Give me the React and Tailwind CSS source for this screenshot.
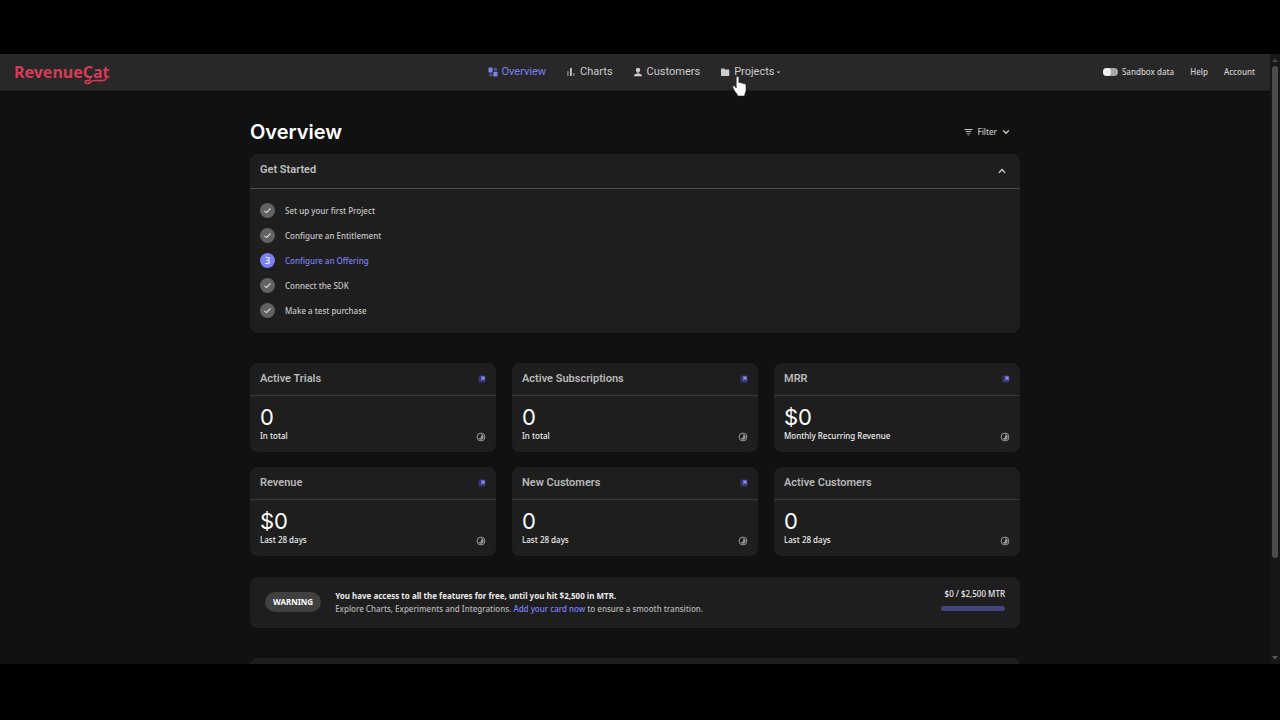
import React, { useState } from 'react';

const Logo = () => (
  <a href="#" className="relative justify-self-start font-['Noto_Sans',sans-serif] text-base leading-5 font-bold text-[#d43d57]">
    RevenueCat
    <svg className="absolute top-[9px] left-[68px]" width="29" height="14" viewBox="0 0 29 14" fill="none" stroke="currentColor" strokeWidth="1.6" strokeLinecap="round">
      <path d="M8 6.500C8.500 9.500 7 9.800 5.500 9.600C3.500 9.300 2.800 10.300 3.200 11.400C3.800 13 7.300 13 8.500 11C9.500 9 13 9.500 17 9.600C22.500 9.700 24.500 9 24.500 6" />
    </svg>
  </a>
);

const OverviewIcon = () => (
  <svg width="10" height="10" viewBox="0 0 10 10" fill="currentColor">
    <rect x="0.500" y="0.500" width="4" height="5" rx="0.800" />
    <rect x="5.500" y="0.800" width="3.500" height="3" rx="0.700" opacity="0.450" />
    <rect x="1" y="6.500" width="3.500" height="2.700" rx="0.700" opacity="0.450" />
    <rect x="5.300" y="4.800" width="4.200" height="4.700" rx="0.800" />
  </svg>
);

const ChartsIcon = () => (
  <svg width="10" height="10" viewBox="0 0 10 10" fill="currentColor">
    <rect x="1" y="4" width="1.700" height="5" rx="0.500" opacity="0.500" />
    <rect x="4" y="1" width="1.800" height="8" rx="0.500" />
    <rect x="7" y="6" width="1.500" height="3" rx="0.500" opacity="0.500" />
  </svg>
);

const CustomersIcon = () => (
  <svg width="10" height="10" viewBox="0 0 10 10" fill="currentColor">
    <circle cx="5" cy="3" r="2.200" />
    <rect x="3.800" y="4.500" width="2.400" height="2.500" opacity="0.600" />
    <path d="M1 9.300C1 7.200 2.500 6.800 5 6.800S9 7.200 9 9.300Z" />
  </svg>
);

const ProjectsIcon = () => (
  <svg width="10" height="10" viewBox="0 0 10 10" fill="currentColor">
    <path d="M1 2.500C1 1.800 1.400 1.500 2 1.500H4L5 2.500H8.300C9 2.500 9.300 2.900 9.300 3.500V8C9.300 8.700 9 9 8.300 9H2C1.400 9 1 8.700 1 8Z" />
  </svg>
);

const HandCursor = () => (
  <svg className="absolute top-3 left-3" width="16" height="21" viewBox="0 0 16 21" fill="#fff" stroke="#222" strokeWidth="0.600">
    <path d="M4.200 1.800C4.200 0.200 6.800 0.200 6.900 1.800V7C7.500 6 9 6.200 9.300 7.300C10 6.500 11.400 6.900 11.600 8C12.500 7.400 14 7.800 14 9.300V14C14 16 12.800 17.200 12.500 20H5.600C5.400 17.500 3 16.500 1.800 13.500L0.800 11C0.500 9.600 2.100 9.200 2.900 10.300L4.200 12Z" />
  </svg>
);

const Chevron = ({ up }) => (
  <svg width="8" height="8" viewBox="0 0 8 8" fill="none" stroke="currentColor" strokeWidth="1.300" strokeLinecap="round">
    <path d={up ? 'M1.200 5.500L4 2.500L6.800 5.500' : 'M1.500 2.800L4 5.300L6.500 2.800'} />
  </svg>
);

const FilterIcon = () => (
  <svg width="9" height="8" viewBox="0 0 9 8" fill="none" stroke="currentColor" strokeWidth="1">
    <path d="M0.500 1.500H8.500M1.800 3.500H7.200" />
    <path d="M2.500 5.500H6.500M3.500 7H5.500" opacity="0.600" />
  </svg>
);

const OpenChartIcon = () => (
  <svg width="8" height="8" viewBox="0 0 8 8" fill="none">
    <rect x="0.500" y="0.500" width="7" height="7" rx="1" fill="#35356b" />
    <path d="M3 2.200H6V5.200M6 2.200L3 5.200" stroke="#8d90ff" strokeWidth="1.200" />
  </svg>
);

const FreshnessIcon = () => (
  <svg width="10" height="10" viewBox="0 0 10 10" fill="none">
    <circle cx="5" cy="5" r="3.900" stroke="#9a9a9a" strokeWidth="1" />
    <path d="M5.300 2.300A2.700 2.700 0 1 1 2.700 6.500L5 5.500Z" fill="#9a9a9a" />
  </svg>
);

const steps = [
  { label: 'Set up your first Project', done: true },
  { label: 'Configure an Entitlement', done: true },
  { label: 'Configure an Offering', done: false },
  { label: 'Connect the SDK', done: true },
  { label: 'Make a test purchase', done: true },
];

const metrics = [
  { title: 'Active Trials', value: '0', note: 'In total', link: true },
  { title: 'Active Subscriptions', value: '0', note: 'In total', link: true },
  { title: 'MRR', value: '$0', note: 'Monthly Recurring Revenue', link: true },
  { title: 'Revenue', value: '$0', note: 'Last 28 days', link: true },
  { title: 'New Customers', value: '0', note: 'Last 28 days', link: true },
  { title: 'Active Customers', value: '0', note: 'Last 28 days', link: false },
];

const Header = () => (
  <header className="grid h-[37px] shrink-0 grid-cols-[1fr_auto_1fr] items-center border-b border-[#1c1c1c] bg-[#282828] pr-[15px] pl-3.5">
    <Logo />
    <nav className="flex items-center gap-5 font-['Roboto',sans-serif] text-[11px] leading-4 font-normal text-[#cccccc]">
      <a href="#" className="flex items-center gap-1 text-[#7c80f5]"><OverviewIcon />Overview</a>
      <a href="#" className="flex items-center gap-1"><ChartsIcon />Charts</a>
      <a href="#" className="flex items-center gap-1"><CustomersIcon />Customers</a>
      <button type="button" className="relative flex items-center gap-1">
        <ProjectsIcon />
        Projects
        <svg className="-ml-0.5" width="5" height="4" viewBox="0 0 5 4" fill="currentColor"><path d="M0.500 1.500H4.500L2.500 3.300Z" /></svg>
        <HandCursor />
      </button>
    </nav>
    <div className="flex items-center gap-4 justify-self-end leading-4 text-[#cfcfcf]">
      <label className="flex items-center gap-1">
        <input
          type="checkbox"
          role="switch"
          className="h-2 w-[15px] appearance-none rounded-full bg-[#a9a9a9] before:block before:size-2 before:rounded-full before:bg-[#efefef]"
        />
        Sandbox data
      </label>
      <a href="#">Help</a>
      <a href="#">Account</a>
    </div>
  </header>
);

const GetStarted = () => {
  const [open, setOpen] = useState(true);

  return (
    <section className="rounded-lg bg-[#1e1e1e]">
      <div className="flex h-[35px] items-center justify-between border-b border-[#4d4d4d] px-2.5">
        <h2 className="pb-0.5 font-['Roboto',sans-serif] text-[11px] leading-4 font-semibold text-[#c0c0c0]">Get Started</h2>
        <button type="button" aria-label="Toggle get started" aria-expanded={open} onClick={() => setOpen(!open)} className="p-1 text-[#c8c8c8]">
          <Chevron up={open} />
        </button>
      </div>
      {open && (
        <ol className="flex flex-col gap-2.5 px-2.5 pt-3.5 pb-[15px]">
          {steps.map((step, i) => (
            <li key={step.label} className="flex h-[15px] items-center gap-2.5">
              {step.done ? (
                <span className="flex size-[15px] items-center justify-center rounded-full bg-[#626262]">
                  <svg width="9" height="9" viewBox="0 0 9 9" fill="none" stroke="#e2e2e2" strokeWidth="1.100">
                    <path d="M1.500 4.800L3.500 6.600L7.500 2.500" />
                  </svg>
                </span>
              ) : (
                <span className="flex size-[15px] items-center justify-center rounded-full bg-[#7c80f0] text-[9px] text-white">{i + 1}</span>
              )}
              <a href="#" className={step.done ? 'text-[#c6c6c6]' : 'text-[#7c80f5]'}>{step.label}</a>
            </li>
          ))}
        </ol>
      )}
    </section>
  );
};

const MetricCard = ({ metric }) => (
  <article className="rounded-lg bg-[#1e1e1e]">
    <div className="flex h-[33px] items-center justify-between border-b border-[#383838] px-2.5">
      <h2 className="font-['Roboto',sans-serif] text-[11px] leading-4 font-semibold text-[#b8b8b8]">{metric.title}</h2>
      {metric.link && <a href="#" aria-label={`Open ${metric.title} chart`}><OpenChartIcon /></a>}
    </div>
    <div className="flex h-14 items-end justify-between px-2.5 pb-2.5">
      <div>
        <p className="font-['Inter',sans-serif] text-[22px] leading-[26px] font-normal text-white">{metric.value}</p>
        <p className="leading-3 text-[#ededed]">{metric.note}</p>
      </div>
      <FreshnessIcon />
    </div>
  </article>
);

const UsageBanner = () => (
  <section className="flex h-[51px] items-center rounded-lg bg-[#1e1e1e] px-[15px] pb-0.5">
    <span className="rounded-full bg-[#404040] px-2 py-0.5 leading-4 font-bold text-white">WARNING</span>
    <div className="ml-3.5 leading-[13px]">
      <p className="font-bold text-[#ececec]">You have access to all the features for free, until you hit $2,500 in MTR.</p>
      <p className="text-[#b8b8b8]">
        Explore Charts, Experiments and Integrations. <a href="#" className="text-[#7c80f5]">Add your card now</a> to ensure a smooth transition.
      </p>
    </div>
    <div className="ml-auto flex w-16 flex-col gap-1 pb-1.5 leading-4">
      <p className="text-right text-[#ededed]">$0 / $2,500 MTR</p>
      <div className="h-[5px] rounded-full bg-[#43437f]" />
    </div>
  </section>
);

const Scrollbar = () => (
  <div className="flex w-2.5 shrink-0 flex-col items-center bg-[#171717] py-1">
    <svg width="6" height="4" viewBox="0 0 6 4" fill="#4a4a4a"><path d="M0 4L3 0.500L6 4Z" /></svg>
    <div className="mt-1 mb-auto h-[492px] w-1.5 rounded-full bg-[#4c4c4c]" />
    <svg width="6" height="4" viewBox="0 0 6 4" fill="#5a5a5a"><path d="M0 0L3 3.500L6 0Z" /></svg>
  </div>
);

const App = () => (
  <div className="h-screen bg-black pt-[54px] pb-14 font-['Noto_Sans',sans-serif] text-[8px] font-medium">
    <div className="flex h-full overflow-hidden bg-[#111111]">
      <div className="flex min-w-0 flex-1 flex-col overflow-hidden">
        <Header />
        <main className="mx-auto w-full max-w-[770px] pt-7">
          <div className="flex items-center justify-between pt-px pr-2.5">
            <h1 className="font-['Inter',sans-serif] text-xl leading-6 font-semibold text-white">Overview</h1>
            <button type="button" className="flex items-center gap-1 text-[#c8c8c8]">
              <FilterIcon />
              <span className="pr-px">Filter</span>
              <Chevron />
            </button>
          </div>
          <div className="mt-2.5">
            <GetStarted />
          </div>
          <div className="mt-[30px] grid grid-cols-3 gap-x-4 gap-y-[15px]">
            {metrics.map((metric) => (
              <MetricCard key={metric.title} metric={metric} />
            ))}
          </div>
          <div className="mt-[21px]">
            <UsageBanner />
          </div>
          <section className="mt-[30px] h-40 rounded-lg bg-[#1e1e1e]" />
        </main>
      </div>
      <Scrollbar />
    </div>
  </div>
);

export default App;
